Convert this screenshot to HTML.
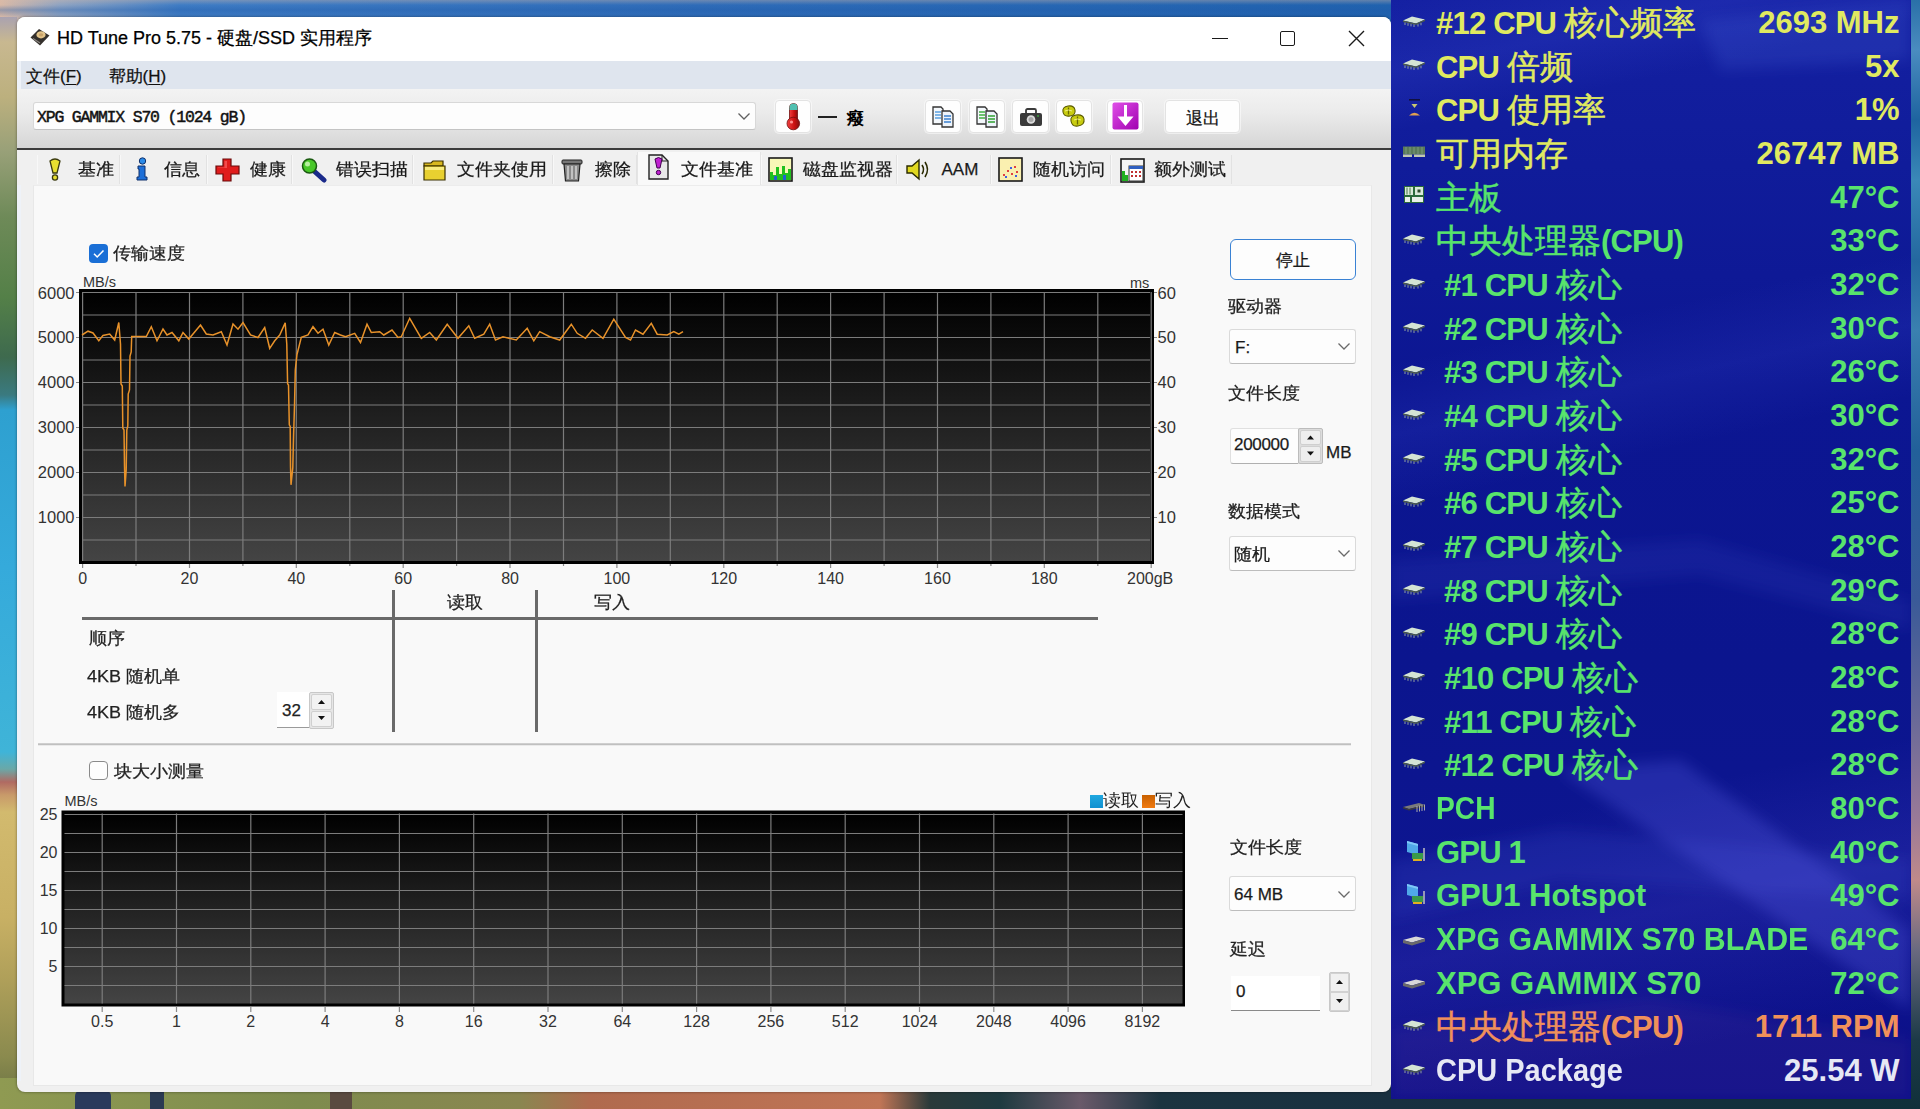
<!DOCTYPE html>
<html><head><meta charset="utf-8">
<style>
*{margin:0;padding:0;box-sizing:border-box}
html,body{width:1920px;height:1109px;overflow:hidden}
body{position:relative;font-family:"Liberation Sans",sans-serif;color:#222;background:#2a4a70}
.a{position:absolute}
.t{position:absolute;white-space:nowrap}
u{text-decoration-thickness:1px;text-underline-offset:2px}
</style></head><body>
<div class="a" style="left:0;top:0;width:1920px;height:1109px;background:linear-gradient(90deg,#d9b9a6 0px,#8ea3c2 60px,#3f7cc4 180px,#2f6cb8 700px,#2062ae 1391px,#2b6fb5 1920px)"></div>
<div class="a" style="left:0;top:17px;width:17px;height:1080px;background:linear-gradient(180deg,#aaa2b0 0px,#c8b890 25px,#bcb07e 80px,#98a078 135px,#6e8a58 200px,#548048 280px,#3e6a4e 340px,#3a7a80 378px,#2ea0d0 393px,#35aadb 550px,#3fb4d8 735px,#6aa8a8 752px,#b06a62 765px,#c89a6a 778px,#d2ba6e 795px,#c8b064 900px,#b0a05a 960px,#8a8a4e 1040px,#6c7444 1080px)"></div>
<div class="a" style="left:0;top:1078px;width:1920px;height:31px;background:linear-gradient(90deg,#8f9a52 0px,#7e8c4e 300px,#8a8650 520px,#b06a4e 590px,#c07556 880px,#2a3a3a 930px,#1e3a40 1000px,#6a5a6a 1080px,#1b3440 1160px,#183040 1391px,#10303a 1920px)"></div>
<div class="a" style="left:75px;top:1090px;width:36px;height:19px;background:#2a3a5c;border-radius:6px 6px 0 0"></div>
<div class="a" style="left:150px;top:1090px;width:14px;height:19px;background:#2a3a52"></div>
<div class="a" style="left:330px;top:1090px;width:22px;height:19px;background:#5a4a40"></div>
<div class="a" style="left:1910px;top:0;width:10px;height:1109px;background:linear-gradient(180deg,#2a70a8 0px,#4a8cc0 50px,#1e64a0 120px,#3a88b8 180px,#2468a0 260px,#3a80b0 330px,#22609a 450px,#3a5a98 600px,#6a6a98 720px,#9a7a98 820px,#c08a8a 880px,#6a6a80 950px,#1c3a48 1040px,#10303a 1109px)"></div>
<div class="a" style="left:0;top:0;width:1391px;height:17px;background:linear-gradient(180deg,rgba(220,190,170,.35) 0px,rgba(60,110,190,.0) 5px,rgba(30,90,170,.35) 10px,rgba(60,110,190,0) 17px)"></div>
<div class="a" style="left:17px;top:17px;width:1374px;height:1075px;background:#f0f0f0;border-radius:8px;box-shadow:0 0 3px rgba(0,0,0,.45)"></div>
<div class="a" style="left:17px;top:17px;width:1374px;height:44px;background:#fff;border-radius:8px 8px 0 0"></div>
<div class="a" style="left:17px;top:61px;width:4px;height:1020px;background:#eef2f8"></div>
<svg class="a" style="left:29px;top:27px" width="22" height="20" viewBox="0 0 22 20"><path d="M1.5 10.5 L10 2 L20.5 8.5 L11 18.5 Z" fill="#34302c"/><ellipse cx="12" cy="7.8" rx="4.6" ry="3.6" fill="#e3c48a"/><ellipse cx="12" cy="7.8" rx="2.2" ry="1.6" fill="#c9a36a"/><path d="M4 11.5 L11 16" stroke="#8a8580" stroke-width="1.2"/></svg>
<div class="t" style="left:57px;top:29.20px;font-size:18px;line-height:18px;color:#000;font-weight:500;;-webkit-text-stroke:0.25px #000">HD Tune Pro 5.75 - 硬盘/SSD 实用程序</div>
<div class="a" style="left:1212px;top:38px;width:16px;height:1.3px;background:#1a1a1a"></div>
<div class="a" style="left:1280px;top:31px;width:15px;height:15px;border:1.4px solid #1a1a1a;border-radius:2px"></div>
<svg class="a" style="left:1348px;top:30px" width="17" height="17" viewBox="0 0 17 17"><path d="M1 1L16 16M16 1L1 16" stroke="#1a1a1a" stroke-width="1.4"/></svg>
<div class="a" style="left:21px;top:61px;width:1370px;height:28px;background:#dfe5ee"></div>
<div class="t" style="left:26px;top:68.05px;font-size:17px;line-height:17px;color:#111;font-weight:500;;-webkit-text-stroke:0.25px #111">文件(<u>F</u>)</div>
<div class="t" style="left:108.5px;top:68.05px;font-size:17px;line-height:17px;color:#111;font-weight:500;;-webkit-text-stroke:0.25px #111">帮助(<u>H</u>)</div>
<div class="a" style="left:17px;top:89px;width:1374px;height:59px;background:linear-gradient(180deg,#f3f3f3 0%,#ebebeb 40%,#d6d6d6 100%)"></div>
<div class="a" style="left:17px;top:148px;width:1374px;height:2px;background:#3c3c3c"></div>
<div class="a" style="left:33px;top:102px;width:723px;height:28px;background:#fdfdfd;border:1px solid #d8d8d8;border-bottom-color:#c4c4c4;border-radius:3px"></div>
<div class="t" style="left:37px;top:110.17px;font-size:16.5px;line-height:16.5px;color:#111;font-weight:400;font-family:'Liberation Mono',monospace;letter-spacing:-1.2px;-webkit-text-stroke:0.45px #111">XPG GAMMIX S70 (1024 gB)</div>
<svg class="a" style="left:737px;top:111px" width="14" height="10" viewBox="0 0 14 10"><path d="M1.5 2.5 L7 8 L12.5 2.5" stroke="#606060" stroke-width="1.3" fill="none"/></svg>
<div class="a" style="left:774px;top:99px;width:38px;height:35px;border-radius:5px;background:rgba(255,255,255,.5)"></div>
<div class="a" style="left:775px;top:100px;width:36px;height:33px;background:#fefefe;border:1px solid #e3e3e3;border-radius:4px"></div>
<svg class="a" style="left:781px;top:101px" width="24" height="30" viewBox="0 0 24 30"><defs><linearGradient id="thg" x1="0" x2="1"><stop offset="0" stop-color="#f04040"/><stop offset=".6" stop-color="#c81010"/><stop offset="1" stop-color="#801010"/></linearGradient></defs><rect x="8.5" y="2.5" width="8" height="20" rx="4" fill="url(#thg)" stroke="#701010" stroke-width=".8"/><path d="M8.5 6.5 A4 4 0 0 1 16.5 6.5 V9 H8.5Z" fill="#50c0b0"/><circle cx="12.3" cy="22.5" r="6.3" fill="url(#thg)" stroke="#701010" stroke-width=".8"/><circle cx="10.5" cy="21" r="1.6" fill="#ff9090"/></svg>
<div class="a" style="left:818px;top:115.5px;width:19px;height:2.2px;background:#222"></div>
<div class="t" style="left:847px;top:109.55px;font-size:17px;line-height:17px;color:#000;font-weight:700;">癈</div>
<div class="a" style="left:924px;top:99px;width:38px;height:35px;border-radius:5px;background:rgba(255,255,255,.5)"></div>
<div class="a" style="left:925px;top:100px;width:36px;height:33px;background:#fefefe;border:1px solid #e3e3e3;border-radius:4px"></div>
<div class="a" style="left:968px;top:99px;width:38px;height:35px;border-radius:5px;background:rgba(255,255,255,.5)"></div>
<div class="a" style="left:969px;top:100px;width:36px;height:33px;background:#fefefe;border:1px solid #e3e3e3;border-radius:4px"></div>
<div class="a" style="left:1011px;top:99px;width:39px;height:35px;border-radius:5px;background:rgba(255,255,255,.5)"></div>
<div class="a" style="left:1012px;top:100px;width:37px;height:33px;background:#fefefe;border:1px solid #e3e3e3;border-radius:4px"></div>
<div class="a" style="left:1055px;top:99px;width:38px;height:35px;border-radius:5px;background:rgba(255,255,255,.5)"></div>
<div class="a" style="left:1056px;top:100px;width:36px;height:33px;background:#fefefe;border:1px solid #e3e3e3;border-radius:4px"></div>
<div class="a" style="left:1106px;top:99px;width:38px;height:35px;border-radius:5px;background:rgba(255,255,255,.5)"></div>
<div class="a" style="left:1107px;top:100px;width:36px;height:33px;background:#fefefe;border:1px solid #e3e3e3;border-radius:4px"></div>
<svg class="a" style="left:930px;top:105px" width="26" height="24" viewBox="0 0 26 24"><path d="M3 2h8l2 2v15H3z" fill="#f4f8fc" stroke="#333" stroke-width="1.3"/><path d="M5 7h6M5 10h6M5 13h6" stroke="#5aa0e0" stroke-width="1.6"/><path d="M12 6h8l3 3v13H12z" fill="#eef4fb" stroke="#333" stroke-width="1.3"/><path d="M14 11h7M14 14h7M14 17h7" stroke="#3a80d0" stroke-width="1.6"/></svg>
<svg class="a" style="left:974px;top:105px" width="26" height="24" viewBox="0 0 26 24"><path d="M3 2h8l2 2v15H3z" fill="#f4f8fc" stroke="#333" stroke-width="1.3"/><path d="M5 7h6M5 10h6M5 13h6" stroke="#40b040" stroke-width="1.6"/><path d="M12 6h8l3 3v13H12z" fill="#eef4fb" stroke="#333" stroke-width="1.3"/><path d="M14 11h7M14 14h7M14 17h7" stroke="#30a030" stroke-width="1.6"/></svg>
<svg class="a" style="left:1018px;top:106px" width="26" height="22" viewBox="0 0 26 22"><rect x="2" y="7" width="22" height="13" rx="2" fill="#3a3a3a"/><rect x="8" y="3" width="10" height="5" rx="1.5" fill="none" stroke="#3a3a3a" stroke-width="1.8"/><circle cx="13" cy="13.5" r="4.3" fill="#dcdcdc"/><circle cx="13" cy="13.5" r="2.5" fill="#a8a8a8"/><circle cx="20" cy="10" r="1" fill="#3c9c3c"/></svg>
<svg class="a" style="left:1060px;top:103px" width="28" height="28" viewBox="0 0 28 28"><g stroke="#5a5a00" stroke-width="1.1"><path d="M3 9 Q2 4 8 3 Q14 2 15 7 Q16 12 10 13 Q4 14 3 9Z" fill="#c8cc10"/><path d="M11 18 Q10 13 16 12 Q23 11 24 16 Q25 22 18 23 Q12 24 11 18Z" fill="#c8cc10"/></g><path d="M8.5 4.5 V11.5 M17.5 13.5 V21.5" stroke="#6a6a00" stroke-width="1.3"/><path d="M5 8 Q8.5 6 12 8 M14 17 Q17.5 15 21 17" stroke="#f0f080" stroke-width="1" fill="none"/></svg>
<svg class="a" style="left:1111px;top:101px" width="29" height="30" viewBox="0 0 29 30"><defs><linearGradient id="pg" x1="0" y1="0" x2="1" y2="1"><stop offset="0" stop-color="#e050e8"/><stop offset="1" stop-color="#a000b0"/></linearGradient></defs><rect x="1.5" y="1.5" width="26" height="27" rx="2" fill="url(#pg)"/><path d="M13 4 H16 V15.5 H22.5 L14.5 25 L6.5 15.5 H13Z" fill="#fff"/></svg>
<div class="a" style="left:1164px;top:99px;width:77px;height:35px;border-radius:5px;background:rgba(255,255,255,.5)"></div>
<div class="a" style="left:1165px;top:100px;width:75px;height:33px;background:#fefefe;border:1px solid #e3e3e3;border-radius:4px"></div>
<div class="t" style="left:902.5px;width:600px;text-align:center;top:109.55px;font-size:17px;line-height:17px;color:#111;font-weight:500;;-webkit-text-stroke:0.25px #111">退出</div>
<div class="a" style="left:17px;top:150px;width:1374px;height:35px;background:#f0f0f0"></div>
<div class="a" style="left:37px;top:155px;width:83px;height:29px;background:#f0f0f0;border-right:1px solid #e2e2e2;border-left:1px solid #f8f8f8"></div>
<div class="a" style="left:120px;top:155px;width:87px;height:29px;background:#f0f0f0;border-right:1px solid #e2e2e2;border-left:1px solid #f8f8f8"></div>
<div class="a" style="left:207px;top:155px;width:85px;height:29px;background:#f0f0f0;border-right:1px solid #e2e2e2;border-left:1px solid #f8f8f8"></div>
<div class="a" style="left:292px;top:155px;width:121px;height:29px;background:#f0f0f0;border-right:1px solid #e2e2e2;border-left:1px solid #f8f8f8"></div>
<div class="a" style="left:413px;top:155px;width:140px;height:29px;background:#f0f0f0;border-right:1px solid #e2e2e2;border-left:1px solid #f8f8f8"></div>
<div class="a" style="left:553px;top:155px;width:84px;height:29px;background:#f0f0f0;border-right:1px solid #e2e2e2;border-left:1px solid #f8f8f8"></div>
<div class="a" style="left:637px;top:152px;width:124px;height:34px;background:#f9f9f9;border-left:1px solid #e4e4e4;border-right:1px solid #e4e4e4"></div>
<div class="a" style="left:761px;top:155px;width:136px;height:29px;background:#f0f0f0;border-right:1px solid #e2e2e2;border-left:1px solid #f8f8f8"></div>
<div class="a" style="left:897px;top:155px;width:94px;height:29px;background:#f0f0f0;border-right:1px solid #e2e2e2;border-left:1px solid #f8f8f8"></div>
<div class="a" style="left:991px;top:155px;width:120px;height:29px;background:#f0f0f0;border-right:1px solid #e2e2e2;border-left:1px solid #f8f8f8"></div>
<div class="a" style="left:1111px;top:155px;width:121px;height:29px;background:#f0f0f0;border-right:1px solid #e2e2e2;border-left:1px solid #f8f8f8"></div>
<svg class="a" style="left:47px;top:158px" width="16" height="24" viewBox="0 0 16 24"><path d="M3 3 Q8 -1 13 3 L10 15 H6 Z" fill="#e8e030" stroke="#3a3a10" stroke-width="1.3"/><circle cx="8" cy="19.5" r="2.6" fill="#e8e030" stroke="#3a3a10" stroke-width="1.3"/></svg>
<svg class="a" style="left:134px;top:157px" width="16" height="25" viewBox="0 0 16 25"><circle cx="8.5" cy="4" r="3.2" fill="#2a8ae8" stroke="#10306a" stroke-width="1"/><path d="M4 9 H11 V20 H13 V23 H3 V20 H5 V12 H4 Z" fill="#1d6fd8" stroke="#10306a" stroke-width="1"/></svg>
<svg class="a" style="left:214px;top:157px" width="27" height="26" viewBox="0 0 27 26"><path d="M9 2 H17 V9 H25 V17 H17 V24 H9 V17 H2 V9 H9 Z" fill="#e01c1c" stroke="#6a0a0a" stroke-width="1.2"/><path d="M10.5 4 H13 V11 H4 V10.5 H10.5Z" fill="#ff6a6a" opacity=".6"/></svg>
<svg class="a" style="left:300px;top:157px" width="28" height="26" viewBox="0 0 28 26"><path d="M14 14 L24 23" stroke="#1a2a8a" stroke-width="5" stroke-linecap="round"/><circle cx="9.5" cy="9" r="7" fill="#48c828" stroke="#1a5a10" stroke-width="1.5"/><circle cx="7.5" cy="7" r="2.5" fill="#b8f0a0"/></svg>
<svg class="a" style="left:422px;top:158px" width="26" height="24" viewBox="0 0 26 24"><path d="M2 5 H9 L11 3 H21 V8 H2 Z" fill="#d8b820" stroke="#3a3000" stroke-width="1.2"/><path d="M2 8 H23 V22 H2 Z" fill="#e8d030" stroke="#3a3000" stroke-width="1.2"/><path d="M3 9 H22 V12 H3Z" fill="#f8ec80"/></svg>
<svg class="a" style="left:560px;top:157px" width="24" height="26" viewBox="0 0 24 26"><rect x="2" y="3" width="20" height="4" rx="1" fill="#777" stroke="#222" stroke-width="1"/><path d="M4 7 H20 L18.5 24 H5.5 Z" fill="#8a8a8a" stroke="#222" stroke-width="1.2"/><path d="M8 9 V22 M12 9 V22 M16 9 V22" stroke="#d0d0d0" stroke-width="1.6"/></svg>
<svg class="a" style="left:647px;top:153px" width="23" height="28" viewBox="0 0 23 28"><path d="M2 2 H15 L21 8 V26 H2 Z" fill="#e8e8e8" stroke="#222" stroke-width="1.4"/><path d="M15 2 V8 H21" fill="none" stroke="#222" stroke-width="1"/><path d="M8 6 Q11.5 3 15 6 L13 15 H10 Z" fill="#c020d0" stroke="#400050" stroke-width="1"/><circle cx="11.5" cy="19.5" r="2.2" fill="#c020d0" stroke="#400050" stroke-width="1"/></svg>
<svg class="a" style="left:768px;top:157px" width="25" height="25" viewBox="0 0 25 25"><rect x="1" y="1" width="23" height="23" fill="#f8f8b8" stroke="#1a1a1a" stroke-width="1.6"/><path d="M2 23 V15 H5 V18 H8 V10 H11 V17 H14 V9 H17 V16 H20 V12 H23 V23Z" fill="#20c020"/><path d="M6 23 V19 H9 V23 M15 23 V18 H18 V23" fill="#2060d0"/></svg>
<svg class="a" style="left:905px;top:157px" width="27" height="25" viewBox="0 0 27 25"><path d="M2 9 H7 L14 3 V22 L7 16 H2 Z" fill="#e0d820" stroke="#2a2a00" stroke-width="1.4"/><path d="M17 8 Q20 12.5 17 17 M20 5 Q25 12.5 20 20" stroke="#2a2a00" stroke-width="1.6" fill="none"/></svg>
<svg class="a" style="left:998px;top:157px" width="25" height="25" viewBox="0 0 25 25"><rect x="1" y="1" width="23" height="23" fill="#faf0b0" stroke="#1a1a1a" stroke-width="1.6"/><g fill="#e04040"><rect x="5" y="17" width="2" height="2"/><rect x="9" y="13" width="2" height="2"/><rect x="13" y="16" width="2" height="2"/><rect x="16" y="9" width="2" height="2"/><rect x="18" y="14" width="2" height="2"/></g><g fill="#4060e0"><rect x="7" y="19" width="2" height="2"/><rect x="12" y="10" width="2" height="2"/><rect x="17" y="18" width="2" height="2"/></g></svg>
<svg class="a" style="left:1120px;top:158px" width="25" height="25" viewBox="0 0 25 25"><rect x="1" y="1" width="23" height="23" fill="#f4f4f4" stroke="#1a1a1a" stroke-width="1.6"/><path d="M2 23 V13 H5 V17 H8 V23Z" fill="#20b020"/><rect x="9" y="8" width="14" height="15" fill="#fff" stroke="#333" stroke-width="1"/><rect x="9" y="8" width="14" height="3" fill="#3060c0"/><g fill="#c03030"><rect x="11" y="13" width="2" height="2"/><rect x="15" y="13" width="2" height="2"/><rect x="19" y="13" width="2" height="2"/><rect x="11" y="17" width="2" height="2"/><rect x="15" y="17" width="2" height="2"/><rect x="19" y="17" width="2" height="2"/></g></svg>
<div class="t" style="left:78px;top:160.55px;font-size:17px;line-height:17px;color:#1a1a1a;font-weight:500;;-webkit-text-stroke:0.25px #1a1a1a;transform:scaleX(1.06);transform-origin:0 0">基准</div>
<div class="t" style="left:164px;top:160.55px;font-size:17px;line-height:17px;color:#1a1a1a;font-weight:500;;-webkit-text-stroke:0.25px #1a1a1a;transform:scaleX(1.06);transform-origin:0 0">信息</div>
<div class="t" style="left:250px;top:160.55px;font-size:17px;line-height:17px;color:#1a1a1a;font-weight:500;;-webkit-text-stroke:0.25px #1a1a1a;transform:scaleX(1.06);transform-origin:0 0">健康</div>
<div class="t" style="left:336px;top:160.55px;font-size:17px;line-height:17px;color:#1a1a1a;font-weight:500;;-webkit-text-stroke:0.25px #1a1a1a;transform:scaleX(1.06);transform-origin:0 0">错误扫描</div>
<div class="t" style="left:457px;top:160.55px;font-size:17px;line-height:17px;color:#1a1a1a;font-weight:500;;-webkit-text-stroke:0.25px #1a1a1a;transform:scaleX(1.06);transform-origin:0 0">文件夹使用</div>
<div class="t" style="left:595px;top:160.55px;font-size:17px;line-height:17px;color:#1a1a1a;font-weight:500;;-webkit-text-stroke:0.25px #1a1a1a;transform:scaleX(1.06);transform-origin:0 0">擦除</div>
<div class="t" style="left:681px;top:160.55px;font-size:17px;line-height:17px;color:#1a1a1a;font-weight:500;;-webkit-text-stroke:0.25px #1a1a1a;transform:scaleX(1.06);transform-origin:0 0">文件基准</div>
<div class="t" style="left:802.5px;top:160.55px;font-size:17px;line-height:17px;color:#1a1a1a;font-weight:500;;-webkit-text-stroke:0.25px #1a1a1a;transform:scaleX(1.06);transform-origin:0 0">磁盘监视器</div>
<div class="t" style="left:941.5px;top:160.55px;font-size:17px;line-height:17px;color:#1a1a1a;font-weight:500;;-webkit-text-stroke:0.25px #1a1a1a">AAM</div>
<div class="t" style="left:1033px;top:160.55px;font-size:17px;line-height:17px;color:#1a1a1a;font-weight:500;;-webkit-text-stroke:0.25px #1a1a1a;transform:scaleX(1.06);transform-origin:0 0">随机访问</div>
<div class="t" style="left:1154px;top:160.55px;font-size:17px;line-height:17px;color:#1a1a1a;font-weight:500;;-webkit-text-stroke:0.25px #1a1a1a;transform:scaleX(1.06);transform-origin:0 0">额外测试</div>
<div class="a" style="left:33px;top:185px;width:1339px;height:901px;background:#f9f9f9;border:1px solid #e8e8e8;border-top-color:#ececec"></div>
<svg class="a" style="left:0;top:0" width="1920" height="1109" viewBox="0 0 1920 1109"><defs><linearGradient id="cg" x1="0" y1="0" x2="0" y2="1"><stop offset="0" stop-color="#000"/><stop offset="1" stop-color="#444"/></linearGradient></defs><rect x="79" y="289" width="1075" height="275" fill="#000"/><rect x="82" y="292" width="1068" height="269" fill="url(#cg)"/><path d="M82.6 292V561 M136.0 292V561 M189.5 292V561 M242.9 292V561 M296.3 292V561 M349.8 292V561 M403.2 292V561 M456.6 292V561 M510.0 292V561 M563.5 292V561 M616.9 292V561 M670.3 292V561 M723.8 292V561 M777.2 292V561 M830.6 292V561 M884.1 292V561 M937.5 292V561 M990.9 292V561 M1044.3 292V561 M1097.8 292V561 M1151.2 292V561 M82 292.5H1150 M82 315.0H1150 M82 337.5H1150 M82 360.0H1150 M82 382.5H1150 M82 405.0H1150 M82 427.5H1150 M82 450.0H1150 M82 472.5H1150 M82 495.0H1150 M82 517.5H1150 M82 540.0H1150" stroke="#7c7c7c" stroke-width="1.2" fill="none"/><path d="M82.6 564V568 M136.0 564V566 M189.5 564V568 M242.9 564V566 M296.3 564V568 M349.8 564V566 M403.2 564V568 M456.6 564V566 M510.0 564V568 M563.5 564V566 M616.9 564V568 M670.3 564V566 M723.8 564V568 M777.2 564V566 M830.6 564V568 M884.1 564V566 M937.5 564V568 M990.9 564V566 M1044.3 564V568 M1097.8 564V566 M1151.2 564V568 M76 292.5H79 M1154 292.5H1157 M76 337.5H79 M1154 337.5H1157 M76 382.5H79 M1154 382.5H1157 M76 427.5H79 M1154 427.5H1157 M76 472.5H79 M1154 472.5H1157 M76 517.5H79 M1154 517.5H1157" stroke="#8a8a8a" stroke-width="1.2"/><path d="M82.0 335.0 L88.0 331.2 L93.0 333.0 L98.8 340.8 L103.0 335.4 L109.7 334.0 L114.7 340.0 L118.8 322.5 L120.5 344.0 L121.0 384.0 L122.3 386.0 L122.8 428.0 L124.0 430.0 L124.5 466.0 L125.0 486.5 L126.2 470.0 L126.8 430.0 L127.8 426.0 L128.2 394.0 L129.5 390.0 L130.0 356.0 L131.2 352.0 L131.7 336.6 L146.3 336.6 L151.3 326.7 L157.0 340.8 L163.0 329.0 L167.0 335.0 L172.0 332.5 L178.8 340.8 L183.0 332.5 L188.8 339.0 L200.5 325.0 L206.3 334.0 L213.0 335.0 L221.3 331.7 L227.0 345.0 L233.0 324.0 L238.0 329.2 L243.0 322.5 L250.5 335.0 L258.0 337.5 L264.7 327.5 L269.7 348.3 L274.7 340.8 L279.7 335.0 L285.2 322.9 L286.8 344.3 L287.6 383.7 L288.5 385.0 L289.3 424.8 L290.2 426.5 L290.5 466.0 L291.0 484.8 L292.8 467.6 L293.6 435.0 L294.5 406.0 L295.3 370.0 L297.0 354.5 L301.3 337.4 L308.0 335.0 L313.0 326.7 L318.0 333.3 L323.0 329.2 L328.8 345.0 L334.7 332.5 L340.5 335.0 L345.5 336.7 L354.7 333.3 L360.5 342.5 L367.0 324.2 L371.3 332.5 L379.7 331.7 L383.8 335.0 L392.0 330.0 L398.0 337.5 L401.3 336.7 L409.7 318.3 L421.3 338.3 L429.7 332.5 L436.3 340.0 L447.2 324.2 L458.0 338.3 L468.8 325.8 L474.7 338.3 L483.8 334.2 L489.7 324.2 L495.5 340.0 L503.0 336.7 L516.3 340.0 L527.2 328.3 L533.8 340.8 L539.7 331.7 L549.7 336.7 L559.7 340.0 L571.3 324.2 L577.2 333.3 L585.5 338.3 L592.2 330.0 L603.0 338.3 L613.8 319.2 L625.5 337.5 L630.5 340.0 L635.5 330.0 L643.0 334.2 L651.3 323.3 L657.2 334.2 L667.2 335.0 L673.8 331.7 L678.8 334.2 L683.0 331.7" stroke="#e8922a" stroke-width="1.5" fill="none" stroke-linejoin="miter"/><rect x="61.5" y="810.5" width="1123.5" height="196" fill="#000"/><rect x="64.5" y="813.5" width="1118" height="190" fill="url(#cg)"/><path d="M102.2 813.5V1003.5 M176.5 813.5V1003.5 M250.8 813.5V1003.5 M325.1 813.5V1003.5 M399.4 813.5V1003.5 M473.7 813.5V1003.5 M548.0 813.5V1003.5 M622.3 813.5V1003.5 M696.6 813.5V1003.5 M770.9 813.5V1003.5 M845.2 813.5V1003.5 M919.5 813.5V1003.5 M993.8 813.5V1003.5 M1068.1 813.5V1003.5 M1142.4 813.5V1003.5 M64.5 814.5H1182.5 M64.5 833.5H1182.5 M64.5 852.5H1182.5 M64.5 871.5H1182.5 M64.5 890.5H1182.5 M64.5 909.5H1182.5 M64.5 928.5H1182.5 M64.5 947.5H1182.5 M64.5 966.5H1182.5 M64.5 985.5H1182.5" stroke="#7c7c7c" stroke-width="1.2" fill="none"/><path d="M102.2 1006.5V1012 M176.5 1006.5V1012 M250.8 1006.5V1012 M325.1 1006.5V1012 M399.4 1006.5V1012 M473.7 1006.5V1012 M548.0 1006.5V1012 M622.3 1006.5V1012 M696.6 1006.5V1012 M770.9 1006.5V1012 M845.2 1006.5V1012 M919.5 1006.5V1012 M993.8 1006.5V1012 M1068.1 1006.5V1012 M1142.4 1006.5V1012" stroke="#8a8a8a" stroke-width="1.2"/><path d="M393.5 590V732 M536.5 590V732 M82 618.5H1098" stroke="#6a6a6a" stroke-width="3"/><path d="M38 744.2H1351" stroke="#c0c0c0" stroke-width="2"/></svg>
<div class="t" style="right:1845.5px;top:284.98px;font-size:16.5px;line-height:16.5px;color:#333;font-weight:500;">6000</div>
<div class="t" style="right:1845.5px;top:329.28px;font-size:16.5px;line-height:16.5px;color:#333;font-weight:500;">5000</div>
<div class="t" style="right:1845.5px;top:374.28px;font-size:16.5px;line-height:16.5px;color:#333;font-weight:500;">4000</div>
<div class="t" style="right:1845.5px;top:419.28px;font-size:16.5px;line-height:16.5px;color:#333;font-weight:500;">3000</div>
<div class="t" style="right:1845.5px;top:464.28px;font-size:16.5px;line-height:16.5px;color:#333;font-weight:500;">2000</div>
<div class="t" style="right:1845.5px;top:509.27px;font-size:16.5px;line-height:16.5px;color:#333;font-weight:500;">1000</div>
<div class="t" style="left:1157.5px;top:284.98px;font-size:16.5px;line-height:16.5px;color:#333;font-weight:500;">60</div>
<div class="t" style="left:1157.5px;top:329.28px;font-size:16.5px;line-height:16.5px;color:#333;font-weight:500;">50</div>
<div class="t" style="left:1157.5px;top:374.28px;font-size:16.5px;line-height:16.5px;color:#333;font-weight:500;">40</div>
<div class="t" style="left:1157.5px;top:419.28px;font-size:16.5px;line-height:16.5px;color:#333;font-weight:500;">30</div>
<div class="t" style="left:1157.5px;top:464.28px;font-size:16.5px;line-height:16.5px;color:#333;font-weight:500;">20</div>
<div class="t" style="left:1157.5px;top:509.27px;font-size:16.5px;line-height:16.5px;color:#333;font-weight:500;">10</div>
<div class="t" style="left:83px;top:274.68px;font-size:14.5px;line-height:14.5px;color:#333;font-weight:500;">MB/s</div>
<div class="t" style="left:1130px;top:275.68px;font-size:14.5px;line-height:14.5px;color:#333;font-weight:500;">ms</div>
<div class="t" style="left:-217.4px;width:600px;text-align:center;top:570.90px;font-size:16px;line-height:16px;color:#333;font-weight:500;">0</div>
<div class="t" style="left:-110.54000000000002px;width:600px;text-align:center;top:570.90px;font-size:16px;line-height:16px;color:#333;font-weight:500;">20</div>
<div class="t" style="left:-3.680000000000007px;width:600px;text-align:center;top:570.90px;font-size:16px;line-height:16px;color:#333;font-weight:500;">40</div>
<div class="t" style="left:103.17999999999995px;width:600px;text-align:center;top:570.90px;font-size:16px;line-height:16px;color:#333;font-weight:500;">60</div>
<div class="t" style="left:210.03999999999996px;width:600px;text-align:center;top:570.90px;font-size:16px;line-height:16px;color:#333;font-weight:500;">80</div>
<div class="t" style="left:316.9px;width:600px;text-align:center;top:570.90px;font-size:16px;line-height:16px;color:#333;font-weight:500;">100</div>
<div class="t" style="left:423.76px;width:600px;text-align:center;top:570.90px;font-size:16px;line-height:16px;color:#333;font-weight:500;">120</div>
<div class="t" style="left:530.62px;width:600px;text-align:center;top:570.90px;font-size:16px;line-height:16px;color:#333;font-weight:500;">140</div>
<div class="t" style="left:637.48px;width:600px;text-align:center;top:570.90px;font-size:16px;line-height:16px;color:#333;font-weight:500;">160</div>
<div class="t" style="left:744.3399999999999px;width:600px;text-align:center;top:570.90px;font-size:16px;line-height:16px;color:#333;font-weight:500;">180</div>
<div class="t" style="left:1127px;top:570.90px;font-size:16px;line-height:16px;color:#333;font-weight:500;">200gB</div>
<div class="t" style="right:1862.5px;top:807.20px;font-size:16px;line-height:16px;color:#333;font-weight:500;">25</div>
<div class="t" style="right:1862.5px;top:845.20px;font-size:16px;line-height:16px;color:#333;font-weight:500;">20</div>
<div class="t" style="right:1862.5px;top:883.20px;font-size:16px;line-height:16px;color:#333;font-weight:500;">15</div>
<div class="t" style="right:1862.5px;top:921.20px;font-size:16px;line-height:16px;color:#333;font-weight:500;">10</div>
<div class="t" style="right:1862.5px;top:959.20px;font-size:16px;line-height:16px;color:#333;font-weight:500;">5</div>
<div class="t" style="left:64.5px;top:793.67px;font-size:14.5px;line-height:14.5px;color:#333;font-weight:500;">MB/s</div>
<div class="t" style="left:-197.8px;width:600px;text-align:center;top:1014.40px;font-size:16px;line-height:16px;color:#333;font-weight:500;">0.5</div>
<div class="t" style="left:-123.5px;width:600px;text-align:center;top:1014.40px;font-size:16px;line-height:16px;color:#333;font-weight:500;">1</div>
<div class="t" style="left:-49.19999999999999px;width:600px;text-align:center;top:1014.40px;font-size:16px;line-height:16px;color:#333;font-weight:500;">2</div>
<div class="t" style="left:25.099999999999966px;width:600px;text-align:center;top:1014.40px;font-size:16px;line-height:16px;color:#333;font-weight:500;">4</div>
<div class="t" style="left:99.39999999999998px;width:600px;text-align:center;top:1014.40px;font-size:16px;line-height:16px;color:#333;font-weight:500;">8</div>
<div class="t" style="left:173.7px;width:600px;text-align:center;top:1014.40px;font-size:16px;line-height:16px;color:#333;font-weight:500;">16</div>
<div class="t" style="left:248.0px;width:600px;text-align:center;top:1014.40px;font-size:16px;line-height:16px;color:#333;font-weight:500;">32</div>
<div class="t" style="left:322.30000000000007px;width:600px;text-align:center;top:1014.40px;font-size:16px;line-height:16px;color:#333;font-weight:500;">64</div>
<div class="t" style="left:396.6px;width:600px;text-align:center;top:1014.40px;font-size:16px;line-height:16px;color:#333;font-weight:500;">128</div>
<div class="t" style="left:470.9px;width:600px;text-align:center;top:1014.40px;font-size:16px;line-height:16px;color:#333;font-weight:500;">256</div>
<div class="t" style="left:545.2px;width:600px;text-align:center;top:1014.40px;font-size:16px;line-height:16px;color:#333;font-weight:500;">512</div>
<div class="t" style="left:619.5px;width:600px;text-align:center;top:1014.40px;font-size:16px;line-height:16px;color:#333;font-weight:500;">1024</div>
<div class="t" style="left:693.8px;width:600px;text-align:center;top:1014.40px;font-size:16px;line-height:16px;color:#333;font-weight:500;">2048</div>
<div class="t" style="left:768.0999999999999px;width:600px;text-align:center;top:1014.40px;font-size:16px;line-height:16px;color:#333;font-weight:500;">4096</div>
<div class="t" style="left:842.4000000000001px;width:600px;text-align:center;top:1014.40px;font-size:16px;line-height:16px;color:#333;font-weight:500;">8192</div>
<div class="a" style="left:1090px;top:794.5px;width:12.5px;height:13px;background:linear-gradient(#20a8e0,#1090d0)"></div>
<div class="t" style="left:1102.5px;top:792.05px;font-size:17px;line-height:17px;color:#222;font-weight:500;-webkit-text-stroke:0;transform:scaleX(1.06);transform-origin:0 0">读取</div>
<div class="a" style="left:1142px;top:794.5px;width:12.5px;height:13px;background:linear-gradient(#c86000,#f07a10)"></div>
<div class="t" style="left:1154.5px;top:792.05px;font-size:17px;line-height:17px;color:#222;font-weight:500;-webkit-text-stroke:0;transform:scaleX(1.06);transform-origin:0 0">写入</div>
<div class="a" style="left:89px;top:243.5px;width:19px;height:19px;background:#1a6fd6;border-radius:4px"></div>
<svg class="a" style="left:89px;top:243.5px" width="19" height="19" viewBox="0 0 19 19"><path d="M5 9.8 L8.2 13 L14.5 6.5" stroke="#fff" stroke-width="1.5" fill="none"/></svg>
<div class="t" style="left:113px;top:245.05px;font-size:17px;line-height:17px;color:#222;font-weight:500;;-webkit-text-stroke:0.25px #222;transform:scaleX(1.06);transform-origin:0 0">传输速度</div>
<div class="a" style="left:89px;top:761px;width:19px;height:19px;background:#fdfdfd;border:1.3px solid #8a8a8a;border-radius:4px"></div>
<div class="t" style="left:113.5px;top:763.05px;font-size:17px;line-height:17px;color:#222;font-weight:500;;-webkit-text-stroke:0.25px #222;transform:scaleX(1.06);transform-origin:0 0">块大小测量</div>
<div class="t" style="left:447px;top:594.05px;font-size:17px;line-height:17px;color:#222;font-weight:500;;-webkit-text-stroke:0.25px #222;transform:scaleX(1.06);transform-origin:0 0">读取</div>
<div class="t" style="left:593.5px;top:594.05px;font-size:17px;line-height:17px;color:#222;font-weight:500;;-webkit-text-stroke:0.25px #222;transform:scaleX(1.06);transform-origin:0 0">写入</div>
<div class="t" style="left:89px;top:629.55px;font-size:17px;line-height:17px;color:#222;font-weight:500;;-webkit-text-stroke:0.25px #222;transform:scaleX(1.06);transform-origin:0 0">顺序</div>
<div class="t" style="left:86.5px;top:667.55px;font-size:17px;line-height:17px;color:#222;font-weight:500;;-webkit-text-stroke:0.25px #222;transform:scaleX(1.06);transform-origin:0 0">4KB 随机单</div>
<div class="t" style="left:86.5px;top:704.05px;font-size:17px;line-height:17px;color:#222;font-weight:500;;-webkit-text-stroke:0.25px #222;transform:scaleX(1.06);transform-origin:0 0">4KB 随机多</div>
<div class="a" style="left:277px;top:692px;width:33px;height:36px;background:#fff;border-bottom:1px solid #9a9a9a"></div>
<div class="t" style="left:282px;top:701.55px;font-size:17px;line-height:17px;color:#222;font-weight:500;;-webkit-text-stroke:0.25px #222">32</div>
<div class="a" style="left:309px;top:692px;width:25px;height:37px;background:#e6e6e6;border:1px solid #c8c8c8;border-radius:2px"></div>
<div class="a" style="left:311px;top:694px;width:21px;height:16px;background:#f2f2f2;border:1px solid #d0d0d0;border-radius:2px"></div>
<div class="a" style="left:311px;top:711px;width:21px;height:16px;background:#f2f2f2;border:1px solid #d0d0d0;border-radius:2px"></div>
<svg class="a" style="left:311px;top:694px" width="21" height="33" viewBox="0 0 21 33"><path d="M7 10 L10.5 6 L14 10Z M7 22 L10.5 26 L14 22Z" fill="#111"/></svg>
<div class="a" style="left:1229.5px;top:239px;width:126px;height:41px;background:#fdfdfd;border:1.6px solid #3a82d4;border-radius:6px"></div>
<div class="t" style="left:992.5px;width:600px;text-align:center;top:251.55px;font-size:17px;line-height:17px;color:#1a1a1a;font-weight:500;;-webkit-text-stroke:0.25px #1a1a1a">停止</div>
<div class="t" style="left:1228px;top:297.55px;font-size:17px;line-height:17px;color:#222;font-weight:500;;-webkit-text-stroke:0.25px #222;transform:scaleX(1.06);transform-origin:0 0">驱动器</div>
<div class="a" style="left:1229px;top:328.5px;width:127px;height:35.0px;background:#fdfdfd;border:1px solid #dadada;border-bottom:1.5px solid #bdbdbd;border-radius:3px"></div>
<svg class="a" style="left:1337px;top:342.0px" width="14" height="9" viewBox="0 0 14 9"><path d="M1.5 1.5 L7 7 L12.5 1.5" stroke="#6a6a6a" stroke-width="1.3" fill="none"/></svg>
<div class="t" style="left:1235px;top:338.55px;font-size:17px;line-height:17px;color:#1a1a1a;font-weight:500;;-webkit-text-stroke:0.25px #1a1a1a">F:</div>
<div class="t" style="left:1228px;top:385.25px;font-size:17px;line-height:17px;color:#222;font-weight:500;;-webkit-text-stroke:0.25px #222;transform:scaleX(1.06);transform-origin:0 0">文件长度</div>
<div class="a" style="left:1230px;top:428px;width:69px;height:36px;background:#fdfdfd;border:1px solid #e0e0e0;border-bottom:1.5px solid #b0b0b0;border-radius:3px 0 0 3px"></div>
<div class="t" style="left:1234px;top:436.25px;font-size:17px;line-height:17px;color:#1a1a1a;font-weight:500;letter-spacing:-0.3px;-webkit-text-stroke:0.25px #1a1a1a">200000</div>
<div class="a" style="left:1298px;top:428px;width:25px;height:36px;background:#dcdcdc;border:1px solid #bcbcbc;border-radius:2px"></div>
<div class="a" style="left:1300px;top:430px;width:21px;height:15px;background:#eeeeee;border:1px solid #cfcfcf;border-radius:2px"></div>
<div class="a" style="left:1300px;top:446px;width:21px;height:16px;background:#eeeeee;border:1px solid #cfcfcf;border-radius:2px"></div>
<svg class="a" style="left:1300px;top:430px" width="21" height="32" viewBox="0 0 21 32"><path d="M7 9.5 L10.5 5.5 L14 9.5Z M7 21.5 L10.5 25.5 L14 21.5Z" fill="#111"/></svg>
<div class="t" style="left:1326px;top:443.55px;font-size:17px;line-height:17px;color:#1a1a1a;font-weight:500;;-webkit-text-stroke:0.25px #1a1a1a">MB</div>
<div class="t" style="left:1228px;top:502.75px;font-size:17px;line-height:17px;color:#222;font-weight:500;;-webkit-text-stroke:0.25px #222;transform:scaleX(1.06);transform-origin:0 0">数据模式</div>
<div class="a" style="left:1229px;top:536px;width:127px;height:34.5px;background:#fdfdfd;border:1px solid #dadada;border-bottom:1.5px solid #bdbdbd;border-radius:3px"></div>
<svg class="a" style="left:1337px;top:549.25px" width="14" height="9" viewBox="0 0 14 9"><path d="M1.5 1.5 L7 7 L12.5 1.5" stroke="#6a6a6a" stroke-width="1.3" fill="none"/></svg>
<div class="t" style="left:1234px;top:545.55px;font-size:17px;line-height:17px;color:#1a1a1a;font-weight:500;;-webkit-text-stroke:0.25px #1a1a1a;transform:scaleX(1.06);transform-origin:0 0">随机</div>
<div class="t" style="left:1230px;top:838.55px;font-size:17px;line-height:17px;color:#222;font-weight:500;;-webkit-text-stroke:0.25px #222;transform:scaleX(1.06);transform-origin:0 0">文件长度</div>
<div class="a" style="left:1229px;top:876px;width:127px;height:35px;background:#fdfdfd;border:1px solid #dadada;border-bottom:1.5px solid #bdbdbd;border-radius:3px"></div>
<svg class="a" style="left:1337px;top:889.5px" width="14" height="9" viewBox="0 0 14 9"><path d="M1.5 1.5 L7 7 L12.5 1.5" stroke="#6a6a6a" stroke-width="1.3" fill="none"/></svg>
<div class="t" style="left:1234px;top:885.55px;font-size:17px;line-height:17px;color:#1a1a1a;font-weight:500;;-webkit-text-stroke:0.25px #1a1a1a">64 MB</div>
<div class="t" style="left:1230px;top:940.55px;font-size:17px;line-height:17px;color:#222;font-weight:500;;-webkit-text-stroke:0.25px #222;transform:scaleX(1.06);transform-origin:0 0">延迟</div>
<div class="a" style="left:1231px;top:975.5px;width:89px;height:35px;background:#fff;border-bottom:1.5px solid #8a8a8a"></div>
<div class="t" style="left:1236px;top:983.05px;font-size:17px;line-height:17px;color:#1a1a1a;font-weight:500;;-webkit-text-stroke:0.25px #1a1a1a">0</div>
<div class="a" style="left:1329px;top:972px;width:21px;height:40px;background:#e4e4e4;border:1px solid #c8c8c8;border-radius:2px"></div>
<div class="a" style="left:1330px;top:973px;width:19px;height:19px;background:#f0f0f0;border:1px solid #d2d2d2"></div>
<div class="a" style="left:1330px;top:992px;width:19px;height:19px;background:#f0f0f0;border:1px solid #d2d2d2"></div>
<svg class="a" style="left:1330px;top:973px" width="19" height="38" viewBox="0 0 19 38"><path d="M6 11 L9.5 7 L13 11Z M6 26 L9.5 30 L13 26Z" fill="#111"/></svg>
<div class="a" style="left:1391px;top:0;width:520px;height:1099px;background:linear-gradient(180deg,#1420a2 0%,#101c9a 15%,#0c1692 35%,#0b158e 60%,#0d1590 80%,#0c0f88 100%)"></div>
<div class="a" style="left:1391px;top:0;width:520px;height:1099px;background:linear-gradient(168deg,rgba(255,255,255,0) 0%,rgba(90,110,255,.12) 6%,rgba(255,255,255,0) 11%,rgba(255,255,255,0) 30%,rgba(90,110,255,.10) 36%,rgba(255,255,255,0) 42%,rgba(255,255,255,0) 70%,rgba(130,110,255,.12) 80%,rgba(255,255,255,0) 92%)"></div>
<svg class="a" style="left:1391px;top:0" width="519" height="1099" viewBox="1391 0 519 1099"><defs><filter id="bl" x="-20%" y="-20%" width="140%" height="140%"><feGaussianBlur stdDeviation="7"/></filter></defs><g filter="url(#bl)"><path d="M1560 770 L1680 760 L1910 930 L1910 1010Z" fill="rgba(110,120,255,.22)"/><path d="M1391 860 L1560 830 L1910 860 L1910 900 L1560 880 L1391 920Z" fill="rgba(90,110,240,.12)"/><path d="M1391 1030 L1650 1000 L1910 1040 L1910 1099 L1391 1099Z" fill="rgba(150,90,170,.09)"/><path d="M1700 20 L1910 0 L1910 60 L1720 70Z" fill="rgba(100,140,255,.14)"/><path d="M1391 560 L1700 540 L1910 600 L1910 630 L1700 575 L1391 600Z" fill="rgba(90,110,240,.10)"/></g></svg>
<div class="t" style="left:1436px;top:6.85px;font-size:31px;line-height:31px;color:#e0ea60;font-weight:700;transform:scaleX(1);transform-origin:0 0;letter-spacing:-0.8px">#12 CPU <span style="font-weight:500;font-size:33px;letter-spacing:0;-webkit-text-stroke:0.5px #e0ea60">核心频率</span></div>
<div class="t" style="right:20.5px;top:6.85px;font-size:31px;line-height:31px;color:#e0ea60;font-weight:700;">2693 MHz</div>
<svg class="a" style="left:1402px;top:14.7px" width="24" height="12" viewBox="0 0 24 12"><path d="M1 5.5 L10 1.5 L23 4.5 L14 8.5Z" fill="#d4e4d4"/><path d="M1 5.5 L14 8.5 L23 4.5 V6 L14 10 L1 7Z" fill="#4a5a4a"/><path d="M3 7.5V10 M6 8.2V10.8 M9 8.8V11.4 M12 9.4V12 M16 9.2V11.5 M19 8V10.3" stroke="#a0b0a0" stroke-width=".9"/></svg>
<div class="t" style="left:1436px;top:50.53px;font-size:31px;line-height:31px;color:#e0ea60;font-weight:700;transform:scaleX(1);transform-origin:0 0;letter-spacing:-0.8px">CPU <span style="font-weight:500;font-size:33px;letter-spacing:0;-webkit-text-stroke:0.5px #e0ea60">倍频</span></div>
<div class="t" style="right:20.5px;top:50.53px;font-size:31px;line-height:31px;color:#e0ea60;font-weight:700;">5x</div>
<svg class="a" style="left:1402px;top:58.4px" width="24" height="12" viewBox="0 0 24 12"><path d="M1 5.5 L10 1.5 L23 4.5 L14 8.5Z" fill="#d4e4d4"/><path d="M1 5.5 L14 8.5 L23 4.5 V6 L14 10 L1 7Z" fill="#4a5a4a"/><path d="M3 7.5V10 M6 8.2V10.8 M9 8.8V11.4 M12 9.4V12 M16 9.2V11.5 M19 8V10.3" stroke="#a0b0a0" stroke-width=".9"/></svg>
<div class="t" style="left:1436px;top:94.21px;font-size:31px;line-height:31px;color:#e0ea60;font-weight:700;transform:scaleX(1);transform-origin:0 0;letter-spacing:-0.8px">CPU <span style="font-weight:500;font-size:33px;letter-spacing:0;-webkit-text-stroke:0.5px #e0ea60">使用率</span></div>
<div class="t" style="right:20.5px;top:94.21px;font-size:31px;line-height:31px;color:#e0ea60;font-weight:700;">1%</div>
<svg class="a" style="left:1407px;top:98.1px" width="15" height="20" viewBox="0 0 15 20"><rect x="2" y="1" width="11" height="1.6" fill="#101040"/><path d="M4.5 6 H10.5 L7.5 10Z" fill="#c8c870"/><path d="M2 17.5 Q7.5 12 13 17.5Z" fill="#e0a050"/></svg>
<div class="t" style="left:1436px;top:137.89px;font-size:31px;line-height:31px;color:#e0ea60;font-weight:700;transform:scaleX(1);transform-origin:0 0;letter-spacing:-0.8px"><span style="font-weight:500;font-size:33px;letter-spacing:0;-webkit-text-stroke:0.5px #e0ea60">可用内存</span></div>
<div class="t" style="right:20.5px;top:137.89px;font-size:31px;line-height:31px;color:#e0ea60;font-weight:700;">26747 MB</div>
<svg class="a" style="left:1402px;top:144.7px" width="24" height="14" viewBox="0 0 24 14"><rect x="1" y="1.5" width="22" height="8" fill="#5a7a5a"/><path d="M4 2V9 M8 2V9 M12 2V9 M16 2V9 M20 2V9" stroke="#7a9a7a" stroke-width="1"/><rect x="1" y="9.5" width="9" height="2.5" fill="#c0c8b0"/><rect x="12" y="9.5" width="11" height="2.5" fill="#c0c8b0"/></svg>
<div class="t" style="left:1436px;top:181.57px;font-size:31px;line-height:31px;color:#58e46c;font-weight:700;transform:scaleX(1);transform-origin:0 0;letter-spacing:-0.8px"><span style="font-weight:500;font-size:33px;letter-spacing:0;-webkit-text-stroke:0.5px #58e46c">主板</span></div>
<div class="t" style="right:20.5px;top:181.57px;font-size:31px;line-height:31px;color:#58e46c;font-weight:700;">47°C</div>
<svg class="a" style="left:1404px;top:186.4px" width="20" height="17" viewBox="0 0 20 17"><rect x="0" y="0" width="20" height="17" fill="#2a6a3a"/><rect x="1" y="1" width="8" height="8" fill="#d8e8d8"/><path d="M3 1.5V8.5 M6 1.5V8.5" stroke="#4a7a4a" stroke-width="1"/><rect x="11" y="1" width="8" height="8" fill="#d8e8d8"/><rect x="13.5" y="3.5" width="3" height="3" fill="#2a4a2a"/><rect x="1" y="11" width="5" height="5" fill="#e8f0e8"/><rect x="8" y="11" width="11" height="5" fill="#e8f0e8"/></svg>
<div class="t" style="left:1436px;top:225.25px;font-size:31px;line-height:31px;color:#58e46c;font-weight:700;transform:scaleX(1);transform-origin:0 0;letter-spacing:-0.8px"><span style="font-weight:500;font-size:33px;letter-spacing:0;-webkit-text-stroke:0.5px #58e46c">中央处理器</span>(CPU)</div>
<div class="t" style="right:20.5px;top:225.25px;font-size:31px;line-height:31px;color:#58e46c;font-weight:700;">33°C</div>
<svg class="a" style="left:1402px;top:233.1px" width="24" height="12" viewBox="0 0 24 12"><path d="M1 5.5 L10 1.5 L23 4.5 L14 8.5Z" fill="#d4e4d4"/><path d="M1 5.5 L14 8.5 L23 4.5 V6 L14 10 L1 7Z" fill="#4a5a4a"/><path d="M3 7.5V10 M6 8.2V10.8 M9 8.8V11.4 M12 9.4V12 M16 9.2V11.5 M19 8V10.3" stroke="#a0b0a0" stroke-width=".9"/></svg>
<div class="t" style="left:1444px;top:268.93px;font-size:31px;line-height:31px;color:#58e46c;font-weight:700;transform:scaleX(1);transform-origin:0 0;letter-spacing:-0.8px">#1 CPU <span style="font-weight:500;font-size:33px;letter-spacing:0;-webkit-text-stroke:0.5px #58e46c">核心</span></div>
<div class="t" style="right:20.5px;top:268.93px;font-size:31px;line-height:31px;color:#58e46c;font-weight:700;">32°C</div>
<svg class="a" style="left:1402px;top:276.8px" width="24" height="12" viewBox="0 0 24 12"><path d="M1 5.5 L10 1.5 L23 4.5 L14 8.5Z" fill="#d4e4d4"/><path d="M1 5.5 L14 8.5 L23 4.5 V6 L14 10 L1 7Z" fill="#4a5a4a"/><path d="M3 7.5V10 M6 8.2V10.8 M9 8.8V11.4 M12 9.4V12 M16 9.2V11.5 M19 8V10.3" stroke="#a0b0a0" stroke-width=".9"/></svg>
<div class="t" style="left:1444px;top:312.61px;font-size:31px;line-height:31px;color:#58e46c;font-weight:700;transform:scaleX(1);transform-origin:0 0;letter-spacing:-0.8px">#2 CPU <span style="font-weight:500;font-size:33px;letter-spacing:0;-webkit-text-stroke:0.5px #58e46c">核心</span></div>
<div class="t" style="right:20.5px;top:312.61px;font-size:31px;line-height:31px;color:#58e46c;font-weight:700;">30°C</div>
<svg class="a" style="left:1402px;top:320.5px" width="24" height="12" viewBox="0 0 24 12"><path d="M1 5.5 L10 1.5 L23 4.5 L14 8.5Z" fill="#d4e4d4"/><path d="M1 5.5 L14 8.5 L23 4.5 V6 L14 10 L1 7Z" fill="#4a5a4a"/><path d="M3 7.5V10 M6 8.2V10.8 M9 8.8V11.4 M12 9.4V12 M16 9.2V11.5 M19 8V10.3" stroke="#a0b0a0" stroke-width=".9"/></svg>
<div class="t" style="left:1444px;top:356.29px;font-size:31px;line-height:31px;color:#58e46c;font-weight:700;transform:scaleX(1);transform-origin:0 0;letter-spacing:-0.8px">#3 CPU <span style="font-weight:500;font-size:33px;letter-spacing:0;-webkit-text-stroke:0.5px #58e46c">核心</span></div>
<div class="t" style="right:20.5px;top:356.29px;font-size:31px;line-height:31px;color:#58e46c;font-weight:700;">26°C</div>
<svg class="a" style="left:1402px;top:364.1px" width="24" height="12" viewBox="0 0 24 12"><path d="M1 5.5 L10 1.5 L23 4.5 L14 8.5Z" fill="#d4e4d4"/><path d="M1 5.5 L14 8.5 L23 4.5 V6 L14 10 L1 7Z" fill="#4a5a4a"/><path d="M3 7.5V10 M6 8.2V10.8 M9 8.8V11.4 M12 9.4V12 M16 9.2V11.5 M19 8V10.3" stroke="#a0b0a0" stroke-width=".9"/></svg>
<div class="t" style="left:1444px;top:399.97px;font-size:31px;line-height:31px;color:#58e46c;font-weight:700;transform:scaleX(1);transform-origin:0 0;letter-spacing:-0.8px">#4 CPU <span style="font-weight:500;font-size:33px;letter-spacing:0;-webkit-text-stroke:0.5px #58e46c">核心</span></div>
<div class="t" style="right:20.5px;top:399.97px;font-size:31px;line-height:31px;color:#58e46c;font-weight:700;">30°C</div>
<svg class="a" style="left:1402px;top:407.8px" width="24" height="12" viewBox="0 0 24 12"><path d="M1 5.5 L10 1.5 L23 4.5 L14 8.5Z" fill="#d4e4d4"/><path d="M1 5.5 L14 8.5 L23 4.5 V6 L14 10 L1 7Z" fill="#4a5a4a"/><path d="M3 7.5V10 M6 8.2V10.8 M9 8.8V11.4 M12 9.4V12 M16 9.2V11.5 M19 8V10.3" stroke="#a0b0a0" stroke-width=".9"/></svg>
<div class="t" style="left:1444px;top:443.65px;font-size:31px;line-height:31px;color:#58e46c;font-weight:700;transform:scaleX(1);transform-origin:0 0;letter-spacing:-0.8px">#5 CPU <span style="font-weight:500;font-size:33px;letter-spacing:0;-webkit-text-stroke:0.5px #58e46c">核心</span></div>
<div class="t" style="right:20.5px;top:443.65px;font-size:31px;line-height:31px;color:#58e46c;font-weight:700;">32°C</div>
<svg class="a" style="left:1402px;top:451.5px" width="24" height="12" viewBox="0 0 24 12"><path d="M1 5.5 L10 1.5 L23 4.5 L14 8.5Z" fill="#d4e4d4"/><path d="M1 5.5 L14 8.5 L23 4.5 V6 L14 10 L1 7Z" fill="#4a5a4a"/><path d="M3 7.5V10 M6 8.2V10.8 M9 8.8V11.4 M12 9.4V12 M16 9.2V11.5 M19 8V10.3" stroke="#a0b0a0" stroke-width=".9"/></svg>
<div class="t" style="left:1444px;top:487.33px;font-size:31px;line-height:31px;color:#58e46c;font-weight:700;transform:scaleX(1);transform-origin:0 0;letter-spacing:-0.8px">#6 CPU <span style="font-weight:500;font-size:33px;letter-spacing:0;-webkit-text-stroke:0.5px #58e46c">核心</span></div>
<div class="t" style="right:20.5px;top:487.33px;font-size:31px;line-height:31px;color:#58e46c;font-weight:700;">25°C</div>
<svg class="a" style="left:1402px;top:495.2px" width="24" height="12" viewBox="0 0 24 12"><path d="M1 5.5 L10 1.5 L23 4.5 L14 8.5Z" fill="#d4e4d4"/><path d="M1 5.5 L14 8.5 L23 4.5 V6 L14 10 L1 7Z" fill="#4a5a4a"/><path d="M3 7.5V10 M6 8.2V10.8 M9 8.8V11.4 M12 9.4V12 M16 9.2V11.5 M19 8V10.3" stroke="#a0b0a0" stroke-width=".9"/></svg>
<div class="t" style="left:1444px;top:531.01px;font-size:31px;line-height:31px;color:#58e46c;font-weight:700;transform:scaleX(1);transform-origin:0 0;letter-spacing:-0.8px">#7 CPU <span style="font-weight:500;font-size:33px;letter-spacing:0;-webkit-text-stroke:0.5px #58e46c">核心</span></div>
<div class="t" style="right:20.5px;top:531.01px;font-size:31px;line-height:31px;color:#58e46c;font-weight:700;">28°C</div>
<svg class="a" style="left:1402px;top:538.9px" width="24" height="12" viewBox="0 0 24 12"><path d="M1 5.5 L10 1.5 L23 4.5 L14 8.5Z" fill="#d4e4d4"/><path d="M1 5.5 L14 8.5 L23 4.5 V6 L14 10 L1 7Z" fill="#4a5a4a"/><path d="M3 7.5V10 M6 8.2V10.8 M9 8.8V11.4 M12 9.4V12 M16 9.2V11.5 M19 8V10.3" stroke="#a0b0a0" stroke-width=".9"/></svg>
<div class="t" style="left:1444px;top:574.69px;font-size:31px;line-height:31px;color:#58e46c;font-weight:700;transform:scaleX(1);transform-origin:0 0;letter-spacing:-0.8px">#8 CPU <span style="font-weight:500;font-size:33px;letter-spacing:0;-webkit-text-stroke:0.5px #58e46c">核心</span></div>
<div class="t" style="right:20.5px;top:574.69px;font-size:31px;line-height:31px;color:#58e46c;font-weight:700;">29°C</div>
<svg class="a" style="left:1402px;top:582.5px" width="24" height="12" viewBox="0 0 24 12"><path d="M1 5.5 L10 1.5 L23 4.5 L14 8.5Z" fill="#d4e4d4"/><path d="M1 5.5 L14 8.5 L23 4.5 V6 L14 10 L1 7Z" fill="#4a5a4a"/><path d="M3 7.5V10 M6 8.2V10.8 M9 8.8V11.4 M12 9.4V12 M16 9.2V11.5 M19 8V10.3" stroke="#a0b0a0" stroke-width=".9"/></svg>
<div class="t" style="left:1444px;top:618.37px;font-size:31px;line-height:31px;color:#58e46c;font-weight:700;transform:scaleX(1);transform-origin:0 0;letter-spacing:-0.8px">#9 CPU <span style="font-weight:500;font-size:33px;letter-spacing:0;-webkit-text-stroke:0.5px #58e46c">核心</span></div>
<div class="t" style="right:20.5px;top:618.37px;font-size:31px;line-height:31px;color:#58e46c;font-weight:700;">28°C</div>
<svg class="a" style="left:1402px;top:626.2px" width="24" height="12" viewBox="0 0 24 12"><path d="M1 5.5 L10 1.5 L23 4.5 L14 8.5Z" fill="#d4e4d4"/><path d="M1 5.5 L14 8.5 L23 4.5 V6 L14 10 L1 7Z" fill="#4a5a4a"/><path d="M3 7.5V10 M6 8.2V10.8 M9 8.8V11.4 M12 9.4V12 M16 9.2V11.5 M19 8V10.3" stroke="#a0b0a0" stroke-width=".9"/></svg>
<div class="t" style="left:1444px;top:662.05px;font-size:31px;line-height:31px;color:#58e46c;font-weight:700;transform:scaleX(1);transform-origin:0 0;letter-spacing:-0.8px">#10 CPU <span style="font-weight:500;font-size:33px;letter-spacing:0;-webkit-text-stroke:0.5px #58e46c">核心</span></div>
<div class="t" style="right:20.5px;top:662.05px;font-size:31px;line-height:31px;color:#58e46c;font-weight:700;">28°C</div>
<svg class="a" style="left:1402px;top:669.9px" width="24" height="12" viewBox="0 0 24 12"><path d="M1 5.5 L10 1.5 L23 4.5 L14 8.5Z" fill="#d4e4d4"/><path d="M1 5.5 L14 8.5 L23 4.5 V6 L14 10 L1 7Z" fill="#4a5a4a"/><path d="M3 7.5V10 M6 8.2V10.8 M9 8.8V11.4 M12 9.4V12 M16 9.2V11.5 M19 8V10.3" stroke="#a0b0a0" stroke-width=".9"/></svg>
<div class="t" style="left:1444px;top:705.73px;font-size:31px;line-height:31px;color:#58e46c;font-weight:700;transform:scaleX(1);transform-origin:0 0;letter-spacing:-0.8px">#11 CPU <span style="font-weight:500;font-size:33px;letter-spacing:0;-webkit-text-stroke:0.5px #58e46c">核心</span></div>
<div class="t" style="right:20.5px;top:705.73px;font-size:31px;line-height:31px;color:#58e46c;font-weight:700;">28°C</div>
<svg class="a" style="left:1402px;top:713.6px" width="24" height="12" viewBox="0 0 24 12"><path d="M1 5.5 L10 1.5 L23 4.5 L14 8.5Z" fill="#d4e4d4"/><path d="M1 5.5 L14 8.5 L23 4.5 V6 L14 10 L1 7Z" fill="#4a5a4a"/><path d="M3 7.5V10 M6 8.2V10.8 M9 8.8V11.4 M12 9.4V12 M16 9.2V11.5 M19 8V10.3" stroke="#a0b0a0" stroke-width=".9"/></svg>
<div class="t" style="left:1444px;top:749.41px;font-size:31px;line-height:31px;color:#58e46c;font-weight:700;transform:scaleX(1);transform-origin:0 0;letter-spacing:-0.8px">#12 CPU <span style="font-weight:500;font-size:33px;letter-spacing:0;-webkit-text-stroke:0.5px #58e46c">核心</span></div>
<div class="t" style="right:20.5px;top:749.41px;font-size:31px;line-height:31px;color:#58e46c;font-weight:700;">28°C</div>
<svg class="a" style="left:1402px;top:757.3px" width="24" height="12" viewBox="0 0 24 12"><path d="M1 5.5 L10 1.5 L23 4.5 L14 8.5Z" fill="#d4e4d4"/><path d="M1 5.5 L14 8.5 L23 4.5 V6 L14 10 L1 7Z" fill="#4a5a4a"/><path d="M3 7.5V10 M6 8.2V10.8 M9 8.8V11.4 M12 9.4V12 M16 9.2V11.5 M19 8V10.3" stroke="#a0b0a0" stroke-width=".9"/></svg>
<div class="t" style="left:1436px;top:793.09px;font-size:31px;line-height:31px;color:#58e46c;font-weight:700;transform:scaleX(0.91);transform-origin:0 0;letter-spacing:0px">PCH</div>
<div class="t" style="right:20.5px;top:793.09px;font-size:31px;line-height:31px;color:#58e46c;font-weight:700;">80°C</div>
<svg class="a" style="left:1402px;top:800.9px" width="24" height="13" viewBox="0 0 24 13"><path d="M1 6 L17 2 L23 4 L7 8Z" fill="#7a7a7a"/><path d="M1 6 L7 8 L23 4 V5.5 L7 9.5 L1 7.5Z" fill="#3a3a3a"/><path d="M15 5V11 M17.5 4.5V10.5 M20 4V10 M22.5 3.5V9.5" stroke="#a8a8a8" stroke-width="1"/></svg>
<div class="t" style="left:1436px;top:836.77px;font-size:31px;line-height:31px;color:#58e46c;font-weight:700;transform:scaleX(1);transform-origin:0 0;letter-spacing:-0.8px">GPU 1</div>
<div class="t" style="right:20.5px;top:836.77px;font-size:31px;line-height:31px;color:#58e46c;font-weight:700;">40°C</div>
<svg class="a" style="left:1406px;top:839.6px" width="22" height="23" viewBox="0 0 22 23"><path d="M1 1 L12 4 V15 L1 12Z" fill="#50a8e8"/><path d="M1 1 L12 4 V6 L1 3Z" fill="#80c8f8"/><path d="M6 13 H17 V19 H6Z" fill="#3a9a4a"/><rect x="7" y="19" width="9" height="2" fill="#e0b020"/><path d="M18 8V21" stroke="#c0c0c0" stroke-width="1.5"/></svg>
<div class="t" style="left:1436px;top:880.45px;font-size:31px;line-height:31px;color:#58e46c;font-weight:700;transform:scaleX(1);transform-origin:0 0;letter-spacing:0px">GPU1 Hotspot</div>
<div class="t" style="right:20.5px;top:880.45px;font-size:31px;line-height:31px;color:#58e46c;font-weight:700;">49°C</div>
<svg class="a" style="left:1406px;top:883.3px" width="22" height="23" viewBox="0 0 22 23"><path d="M1 1 L12 4 V15 L1 12Z" fill="#50a8e8"/><path d="M1 1 L12 4 V6 L1 3Z" fill="#80c8f8"/><path d="M6 13 H17 V19 H6Z" fill="#3a9a4a"/><rect x="7" y="19" width="9" height="2" fill="#e0b020"/><path d="M18 8V21" stroke="#c0c0c0" stroke-width="1.5"/></svg>
<div class="t" style="left:1436px;top:924.13px;font-size:31px;line-height:31px;color:#58e46c;font-weight:700;transform:scaleX(0.978);transform-origin:0 0;letter-spacing:0px">XPG GAMMIX S70 BLADE</div>
<div class="t" style="right:20.5px;top:924.13px;font-size:31px;line-height:31px;color:#58e46c;font-weight:700;">64°C</div>
<svg class="a" style="left:1402px;top:934.5px" width="24" height="12" viewBox="0 0 24 12"><path d="M1 5 L14 1.5 L23 3.5 L10 7.5Z" fill="#d8d8d8"/><path d="M1 5 L10 7.5 L23 3.5 V6.5 L10 10.5 L1 8Z" fill="#6a6a6a"/></svg>
<div class="t" style="left:1436px;top:967.81px;font-size:31px;line-height:31px;color:#58e46c;font-weight:700;transform:scaleX(1);transform-origin:0 0;letter-spacing:0px">XPG GAMMIX S70</div>
<div class="t" style="right:20.5px;top:967.81px;font-size:31px;line-height:31px;color:#58e46c;font-weight:700;">72°C</div>
<svg class="a" style="left:1402px;top:978.2px" width="24" height="12" viewBox="0 0 24 12"><path d="M1 5 L14 1.5 L23 3.5 L10 7.5Z" fill="#d8d8d8"/><path d="M1 5 L10 7.5 L23 3.5 V6.5 L10 10.5 L1 8Z" fill="#6a6a6a"/></svg>
<div class="t" style="left:1436px;top:1011.49px;font-size:31px;line-height:31px;color:#f0905a;font-weight:700;transform:scaleX(1);transform-origin:0 0;letter-spacing:-0.8px"><span style="font-weight:500;font-size:33px;letter-spacing:0;-webkit-text-stroke:0.5px #f0905a">中央处理器</span>(CPU)</div>
<div class="t" style="right:20.5px;top:1011.49px;font-size:31px;line-height:31px;color:#f0905a;font-weight:700;">1711 RPM</div>
<svg class="a" style="left:1402px;top:1019.3px" width="24" height="12" viewBox="0 0 24 12"><path d="M1 5.5 L10 1.5 L23 4.5 L14 8.5Z" fill="#d4e4d4"/><path d="M1 5.5 L14 8.5 L23 4.5 V6 L14 10 L1 7Z" fill="#4a5a4a"/><path d="M3 7.5V10 M6 8.2V10.8 M9 8.8V11.4 M12 9.4V12 M16 9.2V11.5 M19 8V10.3" stroke="#a0b0a0" stroke-width=".9"/></svg>
<div class="t" style="left:1436px;top:1055.17px;font-size:31px;line-height:31px;color:#e6e8f4;font-weight:700;transform:scaleX(0.935);transform-origin:0 0;letter-spacing:0px">CPU Package</div>
<div class="t" style="right:20.5px;top:1055.17px;font-size:31px;line-height:31px;color:#e6e8f4;font-weight:700;">25.54 W</div>
<svg class="a" style="left:1402px;top:1063.0px" width="24" height="12" viewBox="0 0 24 12"><path d="M1 5.5 L10 1.5 L23 4.5 L14 8.5Z" fill="#d4e4d4"/><path d="M1 5.5 L14 8.5 L23 4.5 V6 L14 10 L1 7Z" fill="#4a5a4a"/><path d="M3 7.5V10 M6 8.2V10.8 M9 8.8V11.4 M12 9.4V12 M16 9.2V11.5 M19 8V10.3" stroke="#a0b0a0" stroke-width=".9"/></svg>
</body></html>
